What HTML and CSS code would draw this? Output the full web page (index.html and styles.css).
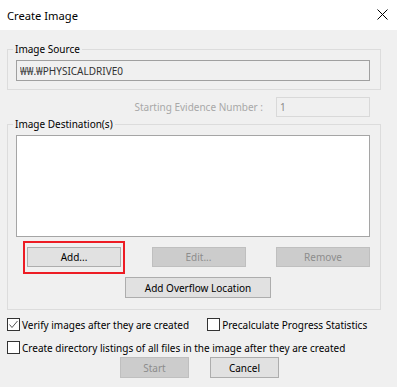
FILE: index.html
```html
<!DOCTYPE html>
<html lang="en">

<head>
  <meta charset="UTF-8">
  <meta name="viewport" content="width=device-width, initial-scale=1.0">
  <title>Create Image</title>
  <link rel="stylesheet" href="styles.css">
</head>

<body>
  <div class="window">
    <header class="titlebar">
      <span class="title">Create Image</span>
      <svg class="close" width="11" height="11" viewBox="0 0 11 11">
        <path d="M0.5 0.5 L10.5 10.5 M10.5 0.5 L0.5 10.5" stroke="#000" stroke-width="1" fill="none" />
      </svg>
    </header>

    <main class="client">
      <fieldset class="group source">
        <legend>Image Source</legend>
        <input class="field readonly" type="text" value="₩₩.₩PHYSICALDRIVE0" readonly>
      </fieldset>

      <div class="evidence-row">
        <label class="muted">Starting Evidence Number :</label>
        <input class="field evidence" type="text" value="1" disabled>
      </div>

      <fieldset class="group dest">
        <legend>Image Destination(s)</legend>
        <div class="listbox"></div>
        <div class="dest-buttons">
          <button class="btn highlight">Add...</button>
          <button class="btn" disabled>Edit...</button>
          <button class="btn" disabled>Remove</button>
        </div>
        <button class="btn overflow">Add Overflow Location</button>
      </fieldset>

      <div class="options">
        <div class="option-row">
          <label class="check">
            <span class="box">
              <svg width="11" height="11" viewBox="0 0 11 11">
                <path d="M1.5 5.5 L4 8.5 L9.5 2" stroke="#555" stroke-width="1" fill="none" />
              </svg>
            </span>
            Verify images after they are created
          </label>
          <label class="check precalc">
            <span class="box"></span>
            Precalculate Progress Statistics
          </label>
        </div>
        <div class="option-row">
          <label class="check">
            <span class="box"></span>
            Create directory listings of all files in the image after they are created
          </label>
        </div>
      </div>

      <div class="actions">
        <button class="btn start" disabled>Start</button>
        <button class="btn cancel">Cancel</button>
      </div>
    </main>
  </div>
</body>

</html>
```

FILE: styles.css
```css
body {
  margin: 0;
  padding: 0;
  font-family: "Noto Sans", "Open Sans", sans-serif;
  font-size: 10px;
  color: #000;
  background-color: #f0f0f0;
}

.window {
  width: 397px;
  height: 387px;
  display: flex;
  flex-direction: column;
  overflow: hidden;
}

.titlebar {
  height: 30px;
  flex-shrink: 0;
  background-color: #fff;
  display: flex;
  align-items: center;
  justify-content: space-between;
  padding: 0 9px 0 7px;
}

.title {
  font-size: 11.2px;
  color: #000;
}

.close {
  display: block;
  margin-top: -1px;
}

.client {
  flex: 1;
  background-color: #f0f0f0;
  padding-top: 12px;
}

.group {
  margin: 0 16px 0 7px;
  border: 1px solid #dcdcdc;
  padding: 4px 10px 8px 8px;
  min-width: 0;
}

.group legend {
  padding: 0 2px;
  margin-left: -3px;
  line-height: 14px;
  font-size: 10px;
}

.field {
  box-sizing: border-box;
  display: block;
  font-family: "Noto Sans", "Open Sans", sans-serif;
  font-size: 10px;
  padding: 0 3px;
  margin: 0;
  outline: none;
}

.field.readonly {
  width: 100%;
  height: 21px;
  border: 1px solid #a0a0a0;
  background-color: #f0f0f0;
  color: #333;
}

.evidence-row {
  display: flex;
  justify-content: flex-end;
  align-items: center;
  gap: 13px;
  margin: 7px 27px 0 0;
}

.muted {
  color: #a8a8a8;
}

.field.evidence {
  width: 94px;
  height: 20px;
  border: 1px solid #d9d9d9;
  background-color: #f0f0f0;
  color: #8a8a8a;
}

.dest {
  padding-bottom: 11px;
}

.listbox {
  height: 102px;
  box-sizing: border-box;
  border: 1px solid #a5a5a5;
  background-color: #fff;
}

.dest-buttons {
  display: flex;
  justify-content: space-between;
  margin-top: 10px;
  padding-left: 11px;
}

.btn {
  box-sizing: border-box;
  height: 20px;
  width: 94px;
  padding: 0;
  font-family: "Noto Sans", "Open Sans", sans-serif;
  font-size: 10px;
  color: #000;
  background-color: #e1e1e1;
  border: 1px solid #adadad;
  border-radius: 0;
}

.btn:disabled {
  background-color: #cccccc;
  border-color: #bfbfbf;
  color: #8d8d8d;
}

.highlight {
  position: relative;
}

.highlight::after {
  content: "";
  position: absolute;
  top: -7px;
  bottom: -8px;
  left: -5px;
  right: -5px;
  border: 2px solid #ed1c24;
}

.overflow {
  display: block;
  width: 146px;
  height: 21px;
  margin: 10px 0 0 109px;
}

.options {
  display: flex;
  flex-direction: column;
  gap: 10px;
  margin: 8px 0 0 7px;
}

.option-row {
  display: flex;
  align-items: center;
}

.check {
  display: flex;
  align-items: center;
  gap: 2px;
  height: 13px;
  white-space: nowrap;
}

.precalc {
  margin-left: 18px;
}

.box {
  box-sizing: border-box;
  width: 13px;
  height: 13px;
  border: 1px solid #333;
  background-color: #fff;
  display: flex;
  align-items: center;
  justify-content: center;
}

.box svg {
  display: block;
}

.actions {
  display: flex;
  gap: 21px;
  margin: 3px 0 0 120px;
}

.start,
.cancel {
  width: 69px;
  height: 21px;
}
```
